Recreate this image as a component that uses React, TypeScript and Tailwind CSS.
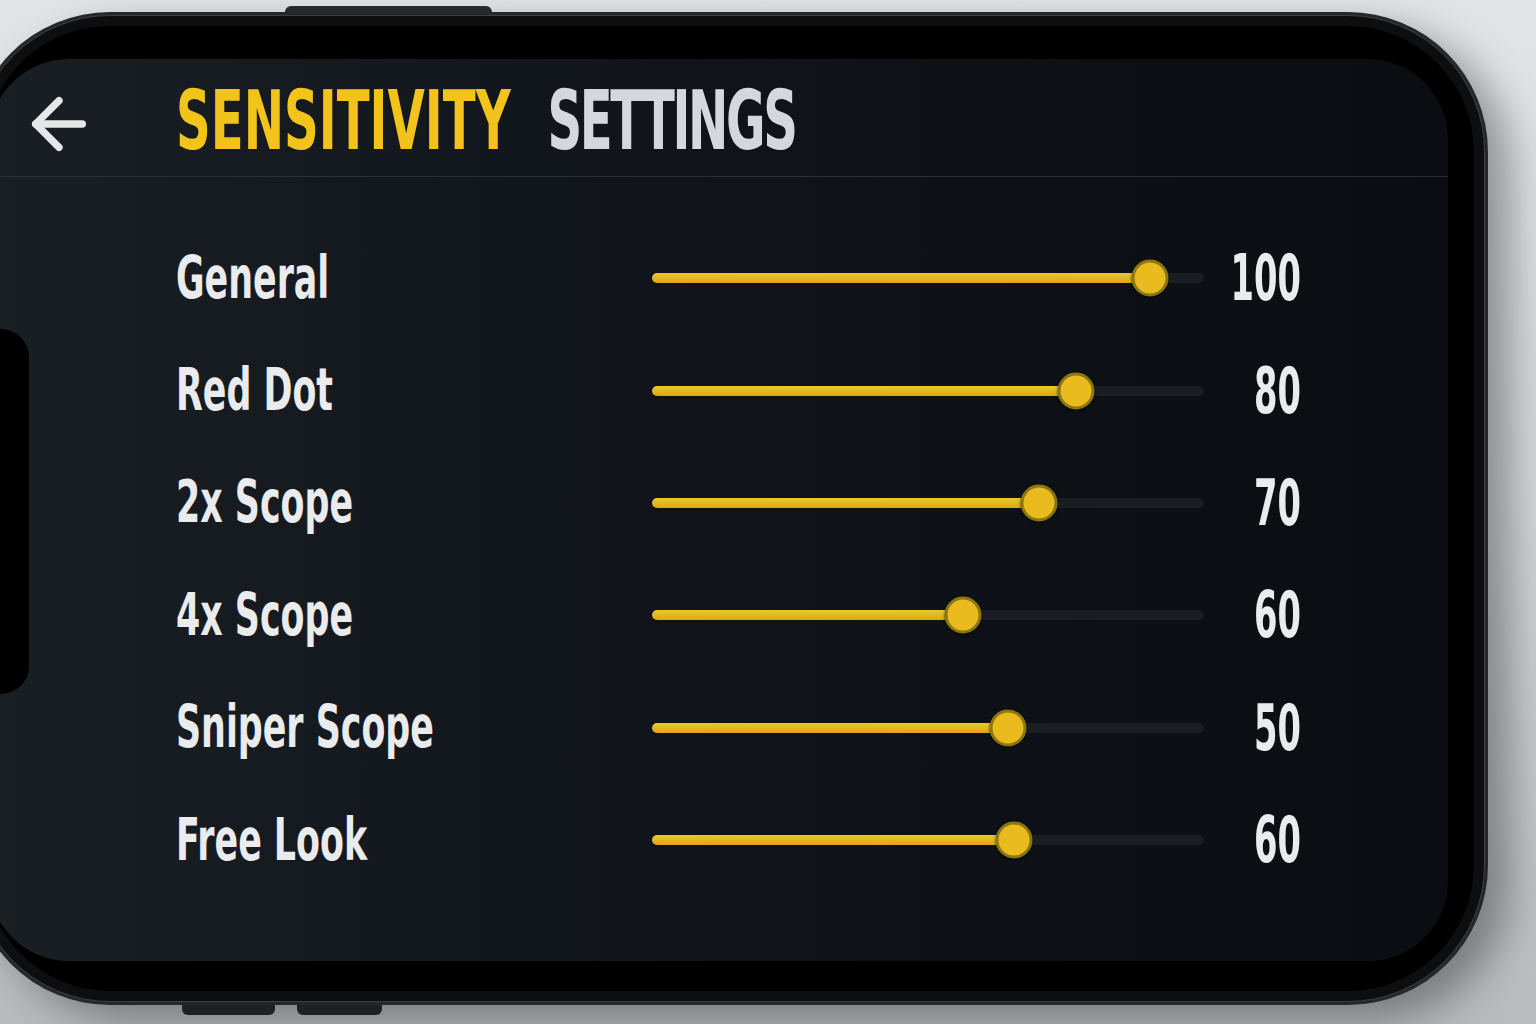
import React from 'react';
import { ArrowLeft } from 'lucide-react';

interface SensitivityRow {
  label: string;
  value: number;
  fill: number;
}

const rows: SensitivityRow[] = [
  { label: 'General', value: 100, fill: 0.902 },
  { label: 'Red Dot', value: 80, fill: 0.768 },
  { label: '2x Scope', value: 70, fill: 0.701 },
  { label: '4x Scope', value: 60, fill: 0.563 },
  { label: 'Sniper Scope', value: 50, fill: 0.645 },
  { label: 'Free Look', value: 60, fill: 0.656 },
];

const condensed = { fontFamily: '"DejaVu Sans Condensed", "Liberation Sans", sans-serif' };

const Slider: React.FC<{ fill: number }> = ({ fill }) => (
  <div className="relative h-[10px] w-full rounded-full bg-[#1a1e22]">
    <div
      className="h-full rounded-full bg-gradient-to-b from-[#f0c52a] to-[#d9a913]"
      style={{ width: `${fill * 100}%` }}
    />
    {/* thumb */}
    <div
      className="absolute top-1/2 h-[37px] w-[37px] -translate-x-1/2 -translate-y-1/2 rounded-full border-[3px] border-[#8a7712] bg-[#e9bb1f] shadow-[0_1px_3px_rgba(0,0,0,0.6)]"
      style={{ left: `${fill * 100}%` }}
    />
  </div>
);

const App: React.FC = () => {
  return (
    <div className="flex h-[1024px] w-[1536px] flex-col overflow-hidden bg-gradient-to-b from-[#e3e4e6] via-[#d3d5d8] to-[#b8bbbe] pt-[6px]">
      {/* power button */}
      <div className="ml-[285px] h-[6px] w-[207px] rounded-t-[6px] bg-[#2a2c2f]" />

      <div className="ml-[-30px] h-[993px] w-[1518px] shrink-0 rounded-[140px] bg-[#25272a] p-[3px] shadow-[22px_16px_40px_rgba(0,0,0,0.35)]">
        <div className="h-full w-full rounded-[137px] border border-[#3c3f42] bg-[#0d0e10] p-[10px]">
          <div className="h-full w-full rounded-[126px] bg-black pb-[30px] pl-[5px] pr-[26px] pt-[33px]">
            <div
              className="relative h-full w-full overflow-hidden rounded-[80px] bg-gradient-to-r from-[#1a1f24] via-[#10141a] to-[#0a0d11]"
              style={condensed}
            >
              {/* camera cutout */}
              <div className="absolute left-[-20px] top-[270px] h-[365px] w-[60px] rounded-[28px] bg-black" />

              {/* header */}
              <div className="flex h-[118px] items-center border-b border-[#2a2f34] pl-[30px] pt-[8px]">
                <ArrowLeft size={80} strokeWidth={2.2} className="mt-[4px] text-[#e4e6e8]" />
                <div className="ml-[77px] inline-block origin-left scale-x-[0.8] scale-y-[1.23] whitespace-nowrap text-[67px] font-bold leading-none">
                  <span className="text-[#f2c41b]">SENSITIVITY</span>
                  <span className="ml-[46px] tracking-[-3px] text-[#d4d7db]">SETTINGS</span>
                </div>
              </div>

              {/* sensitivity rows */}
              <div className="pl-[187px] pt-[45px]">
                {rows.map((row) => (
                  <div key={row.label} className="grid h-[112.4px] grid-cols-[476px_552px_97px] items-center">
                    <span className="inline-block origin-left scale-x-[0.79] scale-y-[1.18] whitespace-nowrap text-[49px] font-bold leading-none text-[#e9ebed]">
                      {row.label}
                    </span>
                    <Slider fill={row.fill} />
                    <span className="inline-block origin-right scale-x-[0.75] scale-y-[1.28] text-right text-[50px] font-bold leading-none text-[#e9ebed]">
                      {row.value}
                    </span>
                  </div>
                ))}
              </div>
            </div>
          </div>
        </div>
      </div>

      {/* volume buttons */}
      <div className="ml-[182px] flex gap-[22px]">
        <div className="h-[10px] w-[93px] rounded-b-[6px] bg-[#1e2022]" />
        <div className="h-[10px] w-[85px] rounded-b-[6px] bg-[#1e2022]" />
      </div>
    </div>
  );
};

export default App;
